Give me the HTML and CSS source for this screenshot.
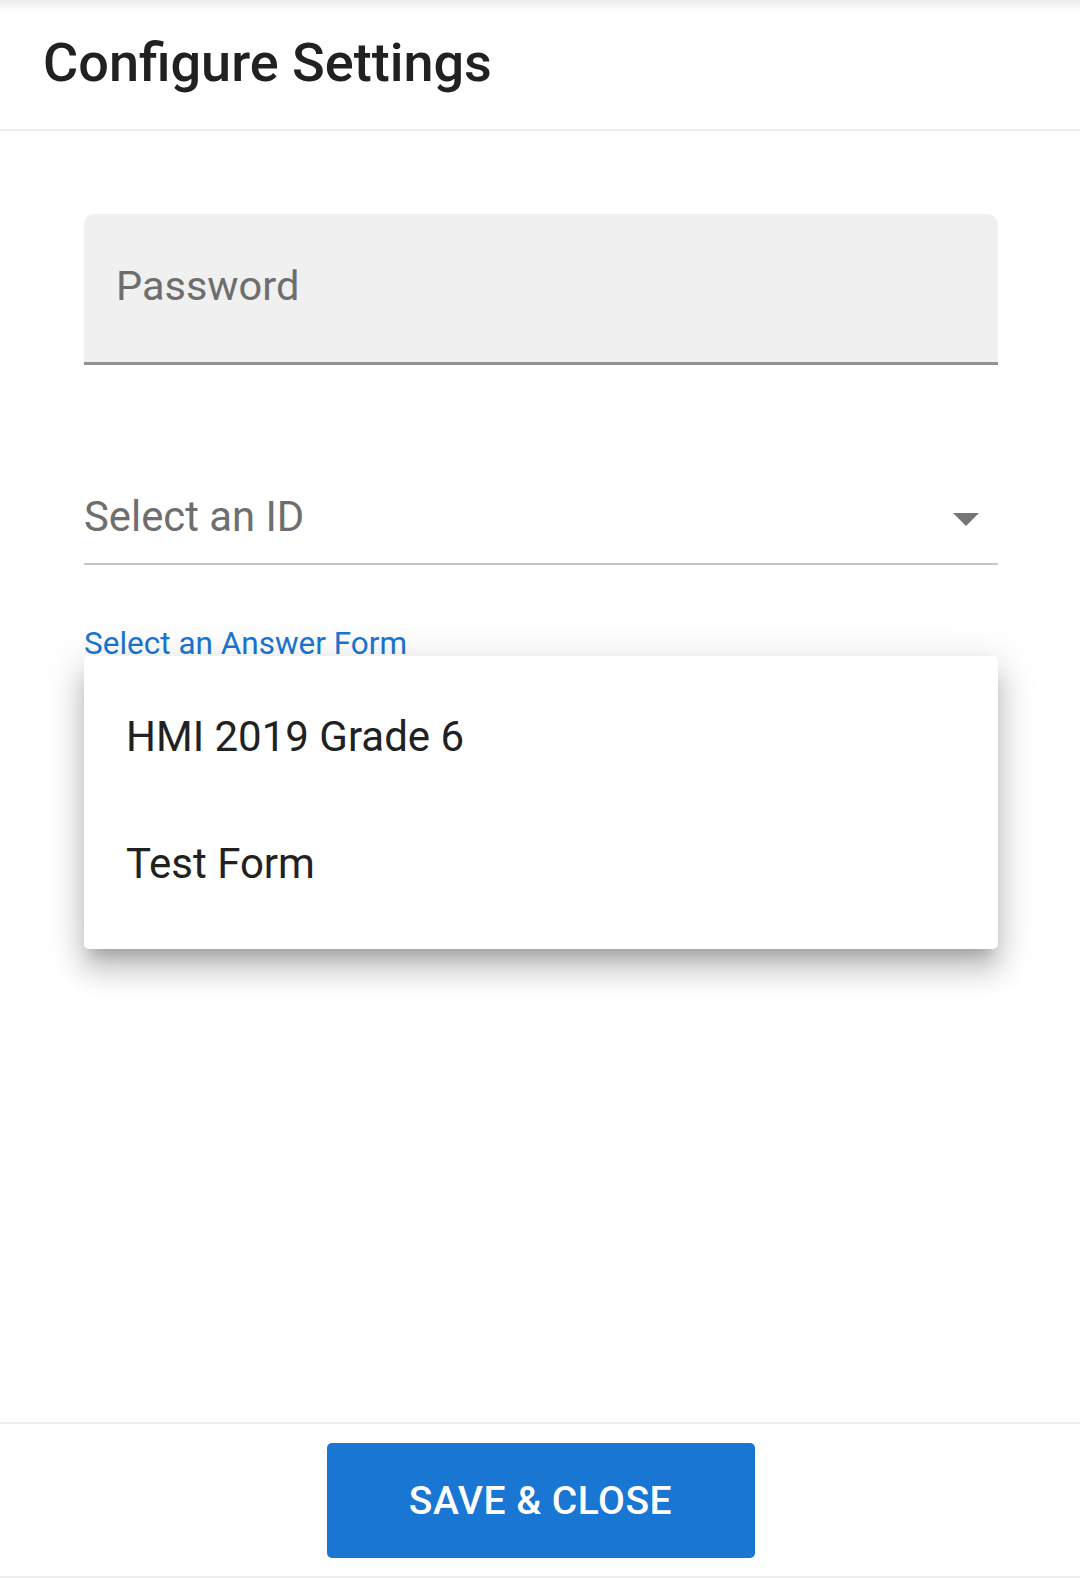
FILE: index.html
```html
<!DOCTYPE html>
<html lang="en">
<head>
<meta charset="utf-8">
<title>Configure Settings</title>
<link rel="stylesheet" href="styles.css">
</head>
<body>
<div class="screen">
  <header class="header">
    <h1 class="title">Configure Settings</h1>
  </header>
  <main class="content">
    <div class="filled-field">
      <span class="field-label">Password</span>
    </div>
    <div class="select-field">
      <span class="select-placeholder">Select an ID</span>
      <svg class="select-arrow" width="26" height="13" viewBox="0 0 26 13" aria-hidden="true"><path d="M0 0H26L13 13Z" fill="#757575"/></svg>
    </div>
    <label class="focused-label">Select an Answer Form</label>
    <ul class="menu">
      <li class="menu-item">HMI 2019 Grade 6</li>
      <li class="menu-item">Test Form</li>
    </ul>
  </main>
  <footer class="footer">
    <button class="save-btn">SAVE &amp; CLOSE</button>
  </footer>
</div>
</body>
</html>
```
FILE: styles.css
```css
* { box-sizing: border-box; }
html, body { margin: 0; padding: 0; background: #fff; }
body { font-family: Roboto, "Noto Sans", sans-serif; color: #212121; }

.screen {
  width: 1080px;
  height: 1578px;
  display: flex;
  flex-direction: column;
  overflow: hidden;
  position: relative;
}

.header {
  height: 131px;
  flex: none;
  padding: 19px 0 0 43px;
  background: linear-gradient(to bottom, #ececec 0px, #f6f6f6 6px, #ffffff 13px);
  border-bottom: 2px solid #eeeeee;
}
.title {
  margin: 0;
  font-size: 54px;
  font-weight: 500;
  line-height: 88px;
  letter-spacing: 0;
  color: #212121;
}

.content {
  flex: 1;
  position: relative;
  margin: 0 82px 0 84px;
  padding-top: 83px;
}

.filled-field {
  height: 151px;
  background: #f0f0f0;
  border-radius: 10px 10px 0 0;
  border-bottom: 3px solid #929292;
  padding: 51px 0 0 32px;
}
.field-label {
  display: block;
  font-size: 41.5px;
  line-height: 41.5px;
  color: #6e6e6e;
}

.select-field {
  margin-top: 131px;
  display: flex;
  justify-content: space-between;
  align-items: flex-start;
  padding-bottom: 25px;
  border-bottom: 2px solid #c6c6c6;
}
.select-placeholder {
  font-size: 41.8px;
  line-height: 41.5px;
  color: #6e6e6e;
}
.select-arrow {
  margin: 17px 19px 0 0;
  display: block;
}

.focused-label {
  display: block;
  margin-top: 63px;
  font-size: 31.5px;
  line-height: 31px;
  color: #1976d2;
}

.menu {
  position: absolute;
  top: 525px;
  left: 0;
  right: 0;
  height: 293px;
  margin: 0;
  padding: 22px 0 0;
  list-style: none;
  background: #fff;
  border-radius: 5px;
  box-shadow: 0 14px 14px -8px rgba(0,0,0,0.2),
              0 22px 27px 3px rgba(0,0,0,0.14),
              0 8px 38px 5px rgba(0,0,0,0.12);
}
.menu-item {
  height: 127px;
  padding: 27px 0 0 42px;
  font-size: 42px;
  line-height: 63px;
  color: #212121;
}

.footer {
  flex: none;
  display: flex;
  justify-content: center;
  padding: 19px 0 18px;
  border-top: 2px solid #eeeeee;
  border-bottom: 2px solid #eeeeee;
}
.save-btn {
  width: 428px;
  height: 115px;
  border: none;
  border-radius: 5px;
  background: #1976d2;
  color: #fff;
  font-family: Roboto, "Noto Sans", sans-serif;
  font-size: 39px;
  font-weight: 500;
  letter-spacing: 0.5px;
  text-transform: uppercase;
  padding: 0;
  margin-left: 1px;
}
```
